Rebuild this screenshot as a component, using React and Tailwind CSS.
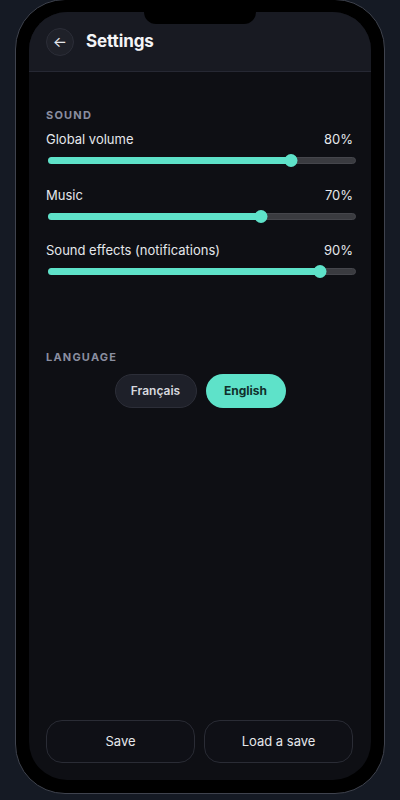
import React from 'react';

const sliders = [
    { label: 'Global volume', value: 80 },
    { label: 'Music', value: 70 },
    { label: 'Sound effects (notifications)', value: 90 },
];

// Track with a fill up to the thumb centre, like a native range input
const Slider = ({ value }) => {
    const center = `calc(6px + ${value / 100} * (100% - 12px))`;
    return (
        <div className="relative h-[13px] ml-[2px] flex items-center">
            <div className="w-full h-[7px] rounded-full bg-[#3a3b40] border border-[#45464c]" />
            <div className="absolute left-0 h-[7px] rounded-full bg-[#5ee2c9]" style={{ width: center }} />
            <div
                className="absolute w-[13px] h-[13px] rounded-full bg-[#5ee2c9] -translate-x-1/2"
                style={{ left: center }}
            />
        </div>
    );
};

const App = () => {
    return (
        <div className="w-[400px] h-[800px] overflow-hidden bg-[#151a24] font-['Inter',sans-serif]">
            <div className="mx-[15px] -mt-px h-[795px] rounded-[50px] border border-[#3f434e] bg-black pl-[13px] pr-[13px] pt-[12px] pb-[13px] flex">
                <div className="flex-1 rounded-[38px] overflow-hidden bg-[#0e0f14] flex flex-col">
                    <div className="relative h-[60px] bg-[#181a22] border-b border-[#262833] flex items-center px-[17px] gap-3">
                        <div className="absolute left-1/2 -translate-x-1/2 top-0 w-[112px] h-[12px] rounded-b-[14px] bg-black" />
                        <button className="w-[28px] h-[28px] rounded-full bg-[#1f2129] border border-[#2c2e38] flex items-center justify-center text-[#e5e7eb] text-[15px] leading-none pb-px">
                            ←
                        </button>
                        <h1 className="text-[17px] font-bold text-[#f3f4f6] tracking-[-0.1px]">Settings</h1>
                    </div>

                    <div className="flex-1 flex flex-col pl-[17px] pr-[15px] pt-[36px]">
                        <div className="text-[11px] font-bold tracking-[1.2px] text-[#8a8ea0] leading-[14px]">SOUND</div>
                        <div className="flex flex-col gap-[19.5px] mt-[9px]">
                            {sliders.map((s) => (
                                <div key={s.label} className="flex flex-col gap-[7px]">
                                    <div className="flex justify-between text-[13px] leading-[16px] text-[#e5e7eb] pr-[3px]">
                                        <span>{s.label}</span>
                                        <span>{s.value}%</span>
                                    </div>
                                    <Slider value={s.value} />
                                </div>
                            ))}
                        </div>

                        <div className="mt-[72px] text-[11px] font-bold tracking-[1.2px] text-[#8a8ea0] leading-[14px]">LANGUAGE</div>
                        <div className="flex justify-center gap-[9px] mt-[10px] pr-[2px]">
                            <button className="w-[82px] h-[34px] rounded-full bg-[#1e2029] border border-[#2c2e38] text-[12px] font-semibold text-[#d6d8de]">
                                Français
                            </button>
                            <button className="w-[80px] h-[34px] rounded-full bg-[#5ee2c9] text-[12px] font-bold text-[#10302b]">
                                English
                            </button>
                        </div>

                        <div className="mt-auto mb-[17px] mr-[3px] flex gap-[9px]">
                            <button className="flex-1 h-[43px] rounded-[16px] border border-[#2a2c35] bg-[#0f1016] text-[13px] text-[#e5e7eb]">
                                Save
                            </button>
                            <button className="flex-1 h-[43px] rounded-[16px] border border-[#2a2c35] bg-[#0f1016] text-[13px] text-[#e5e7eb]">
                                Load a save
                            </button>
                        </div>
                    </div>
                </div>
            </div>
        </div>
    );
};

export default App;
